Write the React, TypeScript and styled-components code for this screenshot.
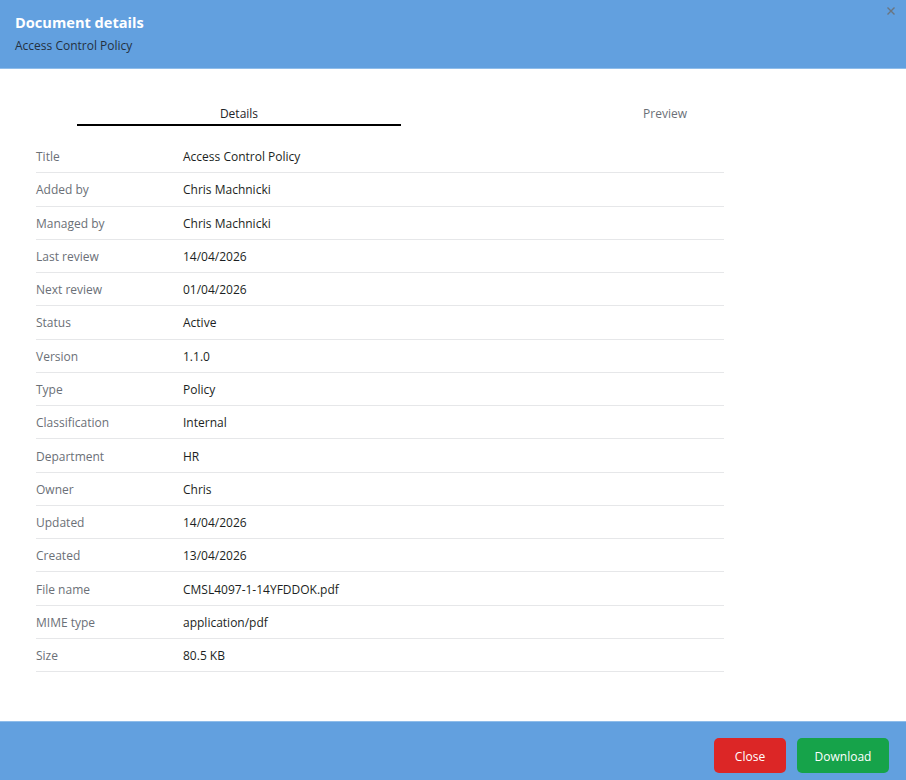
import React, { useState } from 'react';
import styled, { createGlobalStyle } from 'styled-components';

const GlobalStyle = createGlobalStyle`
  html, body {
    margin: 0;
    padding: 0;
    height: 100%;
    overflow: hidden;
    background: #ffffff;
  }
  body {
    font-family: "Open Sans", "Noto Sans", sans-serif;
  }
`;

const DETAILS = [
  { label: 'Title', value: 'Access Control Policy' },
  { label: 'Added by', value: 'Chris Machnicki' },
  { label: 'Managed by', value: 'Chris Machnicki' },
  { label: 'Last review', value: '14/04/2026' },
  { label: 'Next review', value: '01/04/2026' },
  { label: 'Status', value: 'Active' },
  { label: 'Version', value: '1.1.0' },
  { label: 'Type', value: 'Policy' },
  { label: 'Classification', value: 'Internal' },
  { label: 'Department', value: 'HR' },
  { label: 'Owner', value: 'Chris' },
  { label: 'Updated', value: '14/04/2026' },
  { label: 'Created', value: '13/04/2026' },
  { label: 'File name', value: 'CMSL4097-1-14YFDDOK.pdf' },
  { label: 'MIME type', value: 'application/pdf' },
  { label: 'Size', value: '80.5 KB' }
];

const Dialog = styled.div`
  display: flex;
  flex-direction: column;
  width: 100%;
  min-height: 790px;
`;

const Header = styled.header`
  position: relative;
  height: 69px;
  box-sizing: border-box;
  padding: 12px 15px 0;
  background: #62a0df;
  border-bottom: 1px solid #8fbdea;
`;

const HeaderTitle = styled.h2`
  margin: 0;
  font-size: 14.6px;
  font-weight: 700;
  line-height: 20px;
  color: #ffffff;
`;

const HeaderSubtitle = styled.div`
  margin-top: 6px;
  font-size: 12px;
  line-height: 16px;
  color: #24313f;
`;

const CloseX = styled.button`
  position: absolute;
  top: 4px;
  right: 8px;
  width: 14px;
  height: 14px;
  padding: 0;
  border: none;
  background: transparent;
  cursor: pointer;
  display: flex;
  align-items: center;
  justify-content: center;
`;

const Body = styled.main`
  flex: 1;
  padding: 31px 36px 0;
`;

const TabList = styled.div`
  display: grid;
  grid-template-columns: 1fr 1fr;
  margin: 0 -8px 0 -10px;
`;

const Tab = styled.button<{ active: boolean }>`
  position: relative;
  height: 26px;
  padding: 1px 0 0;
  border: none;
  background: transparent;
  font-family: inherit;
  font-size: 12px;
  line-height: 18px;
  color: ${props => props.active ? '#1f2328' : '#6b7077'};
  cursor: pointer;

  &::after {
    content: '';
    display: ${props => props.active ? 'block' : 'none'};
    position: absolute;
    left: 12%;
    right: 12%;
    bottom: 0;
    height: 2px;
    background: #000000;
  }
`;

const Table = styled.div`
  width: 688px;
  margin-top: 14px;
`;

const Row = styled.div`
  display: grid;
  grid-template-columns: 147px 1fr;
  align-items: center;
  height: 33.27px;
  box-sizing: border-box;
  padding-top: 1px;
  border-bottom: 1px solid #e6e7e9;
`;

const Label = styled.div`
  font-size: 12px;
  color: #6b7077;
`;

const Value = styled.div`
  font-size: 12px;
  color: #1c1f23;
`;

const Footer = styled.footer`
  display: flex;
  justify-content: flex-end;
  gap: 11px;
  height: 69px;
  box-sizing: border-box;
  padding: 16px 17px 0;
  background: #62a0df;
  border-top: 1px solid #8fbdea;
`;

const Button = styled.button<{ variant: 'danger' | 'success' }>`
  width: ${props => props.variant === 'danger' ? '72px' : '92px'};
  height: 35px;
  padding: 1px 0 0;
  border: none;
  border-radius: 5px;
  background: ${props => props.variant === 'danger' ? '#dc2626' : '#16a34a'};
  color: #ffffff;
  font-family: inherit;
  font-size: 12px;
  cursor: pointer;
`;

export default function App() {
  const [tab, setTab] = useState<'details' | 'preview'>('details');

  return (
    <>
      <GlobalStyle />
      <Dialog>
        <Header>
          <HeaderTitle>Document details</HeaderTitle>
          <HeaderSubtitle>Access Control Policy</HeaderSubtitle>
          <CloseX aria-label="Close">
            <svg width="10" height="10" viewBox="0 0 10 10">
              <path d="M1.5 1.5l7 7M8.5 1.5l-7 7" stroke="#6a7580" strokeWidth="1.4" />
            </svg>
          </CloseX>
        </Header>
        <Body>
          <TabList>
            <Tab active={tab === 'details'} onClick={() => setTab('details')}>Details</Tab>
            <Tab active={tab === 'preview'} onClick={() => setTab('preview')}>Preview</Tab>
          </TabList>
          <Table>
            {DETAILS.map(item => (
              <Row key={item.label}>
                <Label>{item.label}</Label>
                <Value>{item.value}</Value>
              </Row>
            ))}
          </Table>
        </Body>
        <Footer>
          <Button variant="danger">Close</Button>
          <Button variant="success">Download</Button>
        </Footer>
      </Dialog>
    </>
  );
}
